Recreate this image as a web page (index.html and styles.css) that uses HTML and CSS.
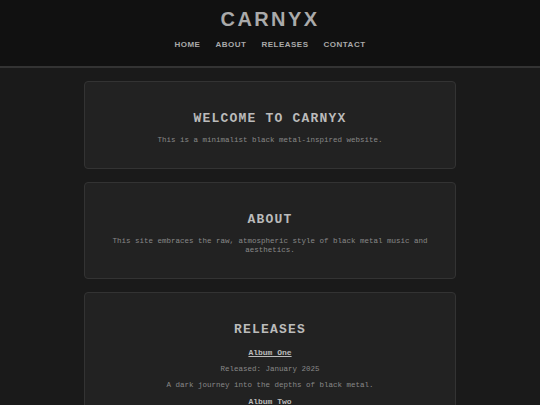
FILE: index.html
```html
<!DOCTYPE html>
<html lang="en">
<head>
<meta charset="utf-8">
<title>Carnyx</title>
<link rel="stylesheet" href="styles.css">
</head>
<body>
<header class="site-header">
  <h1 class="site-title">CARNYX</h1>
  <nav class="site-nav">
    <a class="nav-link" href="#home">HOME</a>
    <a class="nav-link" href="#about">ABOUT</a>
    <a class="nav-link" href="#releases">RELEASES</a>
    <a class="nav-link" href="#contact">CONTACT</a>
  </nav>
</header>
<main class="content">
  <section class="card" id="home">
    <h2 class="card-title">WELCOME TO CARNYX</h2>
    <p class="card-text">This is a minimalist black metal-inspired website.</p>
  </section>
  <section class="card" id="about">
    <h2 class="card-title">ABOUT</h2>
    <p class="card-text">This site embraces the raw, atmospheric style of black metal music and aesthetics.</p>
  </section>
  <section class="card" id="releases">
    <h2 class="card-title">RELEASES</h2>
    <h3 class="album-title"><a class="album-link" href="#">Album One</a></h3>
    <p class="card-text">Released: January 2025</p>
    <p class="card-text">A dark journey into the depths of black metal.</p>
    <h3 class="album-title"><a class="album-link" href="#">Album Two</a></h3>
    <p class="card-text">Released: June 2025</p>
    <p class="card-text">Echoes of the frozen void.</p>
  </section>
</main>
</body>
</html>
```

FILE: styles.css
```css
html, body {
  margin: 0;
  padding: 0;
}
body {
  background: #1a1a1a;
  color: #888;
  font-family: Courier, "Courier New", "Nimbus Mono PS", "FreeMono", monospace;
}
.site-header {
  background: #111;
  border-bottom: 2px solid #333;
  padding: 8px 0 17px;
  text-align: center;
}
.site-title {
  margin: 0 0 9px;
  font-family: "Liberation Sans", Arial, sans-serif;
  font-size: 20px;
  font-weight: bold;
  letter-spacing: 2.4px;
  color: #aaa;
  line-height: 23px;
}
.site-nav {
  display: flex;
  justify-content: center;
  gap: 15px;
}
.nav-link {
  font-family: "Liberation Sans", Arial, sans-serif;
  font-size: 8px;
  font-weight: bold;
  letter-spacing: 0.5px;
  color: #aaa;
  text-decoration: none;
  line-height: 9px;
}
.content {
  width: 372px;
  margin: 13px auto 0;
  display: flex;
  flex-direction: column;
  gap: 13px;
}
.card {
  background: #222;
  border: 1px solid #333;
  border-radius: 4px;
  padding: 16px 16px;
  text-align: center;
}
.card-title {
  margin: 13px 0 10px;
  font-size: 13px;
  line-height: 15px;
  letter-spacing: 1.2px;
  font-weight: bold;
  color: #bbb;
}
.card-text {
  margin: 7.5px 0;
  font-size: 7.5px;
  line-height: 8.5px;
  color: #888;
}
.album-title {
  margin: 8px 0;
  font-size: 8px;
  line-height: 9px;
  font-weight: bold;
}
.card-title + .album-title {
  margin-top: 11px;
}
.album-link {
  color: #bbb;
  text-decoration: underline;
}
```
